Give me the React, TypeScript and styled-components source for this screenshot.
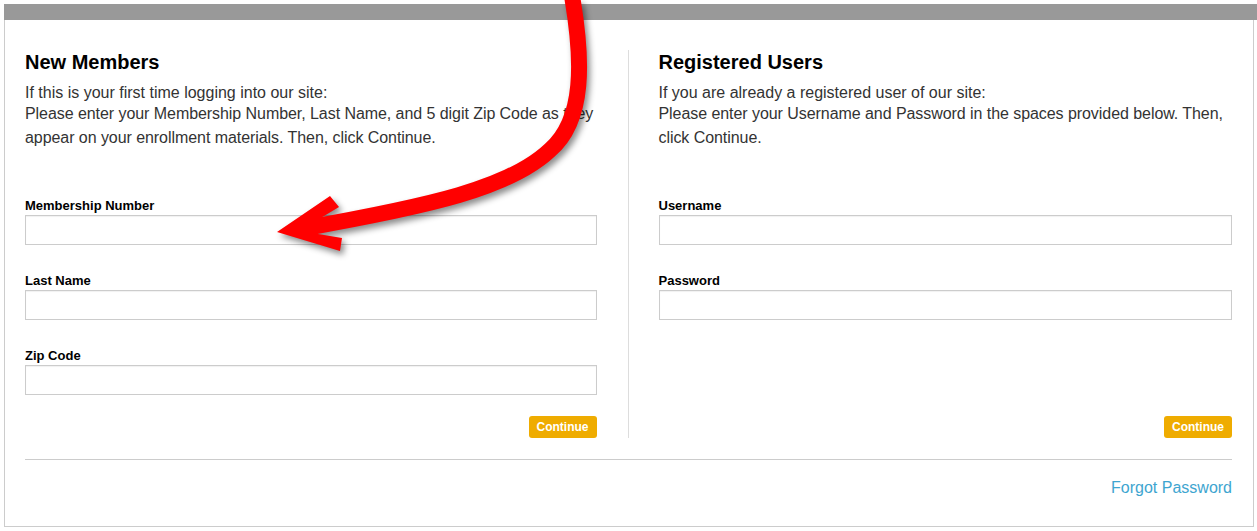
import styled, { createGlobalStyle } from "styled-components"

const GlobalStyle = createGlobalStyle`
    html, body {
        margin: 0;
        padding: 0;
        background: #ffffff;
    }
    body {
        font-family: "Liberation Sans", Arial, sans-serif;
        color: #333333;
    }
    * {
        box-sizing: border-box;
    }
`

const Page = styled.div`
    position: relative;
    width: 1257px;
    height: 531px;
    padding-top: 4px;
    padding-left: 4px;
    overflow: hidden;
`
const TopBar = styled.div`
    height: 16px;
    background-color: #999999;
`
const Card = styled.div`
    width: 1250px;
    border: 1px solid #cccccc;
    border-top: 0px;
    padding: 30px 21px 29px 20px;
`
const Columns = styled.div`
    display: grid;
    grid-template-columns: 1fr 1fr;
`
const Column = styled.div<{ $left?: boolean }>`
    display: flex;
    flex-direction: column;
    padding-left: ${p => (p.$left ? "0px" : "30px")};
    padding-right: ${p => (p.$left ? "31px" : "0px")};
    border-right: ${p => (p.$left ? "1px solid #dddddd" : "0px")};
`
const Heading = styled.h2`
    margin: 0;
    font-size: 20px;
    line-height: 24px;
    font-weight: bold;
    color: #000000;
`
const Intro = styled.div`
    margin-top: 9px;
    font-size: 16px;
    line-height: 19px;
    color: #333333;
`
const Body = styled.p`
    margin: 0;
    font-size: 16px;
    line-height: 24px;
    letter-spacing: -0.06px;
    color: #333333;
`
const Fields = styled.div`
    margin-top: 48px;
`
const Field = styled.div`
    & + & {
        margin-top: 28px;
    }
`
const Label = styled.label`
    display: block;
    font-size: 13px;
    line-height: 15px;
    font-weight: bold;
    color: #000000;
    margin-bottom: 2px;
`
const Input = styled.input`
    display: block;
    width: 100%;
    height: 30px;
    border: 1px solid #cccccc;
    box-shadow: inset 0px 1px 1px rgba(0, 0, 0, 0.06);
    padding: 0 6px;
    font-family: "Liberation Sans", Arial, sans-serif;
    font-size: 14px;
    outline: none;
`
const ButtonRow = styled.div`
    margin-top: auto;
    padding-top: 21px;
    display: flex;
    justify-content: flex-end;
`
const ContinueButton = styled.button`
    height: 22px;
    padding: 0 8px;
    border: 0px;
    border-radius: 3px;
    background-color: #efac00;
    color: #ffffff;
    font-family: "Liberation Sans", Arial, sans-serif;
    font-size: 12px;
    font-weight: bold;
    cursor: pointer;
`
const Rule = styled.hr`
    margin: 21px 0 0 0;
    border: 0px;
    border-top: 1px solid #cccccc;
`
const Footer = styled.div`
    display: flex;
    justify-content: flex-end;
    margin-top: 18px;
`
const ForgotLink = styled.a`
    font-size: 16px;
    line-height: 19px;
    color: #3ea5d0;
    text-decoration: none;
    cursor: pointer;
`
const ArrowLayer = styled.svg`
    position: absolute;
    top: 0;
    left: 0;
    pointer-events: none;
    filter: drop-shadow(3px 4px 3px rgba(0, 0, 0, 0.45));
`

function Arrow() {
    return (
        <ArrowLayer width="1257" height="531" viewBox="0 0 1257 531">
            <path
                d="M 572 -4 C 583 60, 585 120, 550 150 C 510 188, 430 206, 300 229"
                fill="none"
                stroke="#ff0000"
                strokeWidth="16"
            />
            <polygon
                points="277,232 330,196 339,207 314,222 318,234 342,238 340,251"
                fill="#ff0000"
            />
        </ArrowLayer>
    )
}

function LoginPage() {
    return (
        <Page>
            <GlobalStyle />
            <TopBar />
            <Card>
                <Columns>
                    <Column $left>
                        <Heading>New Members</Heading>
                        <Intro>If this is your first time logging into our site:</Intro>
                        <Body>
                            Please enter your Membership Number, Last Name, and 5 digit Zip Code as they
                            appear on your enrollment materials. Then, click Continue.
                        </Body>
                        <Fields>
                            <Field>
                                <Label>Membership Number</Label>
                                <Input type="text" />
                            </Field>
                            <Field>
                                <Label>Last Name</Label>
                                <Input type="text" />
                            </Field>
                            <Field>
                                <Label>Zip Code</Label>
                                <Input type="text" />
                            </Field>
                        </Fields>
                        <ButtonRow>
                            <ContinueButton>Continue</ContinueButton>
                        </ButtonRow>
                    </Column>
                    <Column>
                        <Heading>Registered Users</Heading>
                        <Intro>If you are already a registered user of our site:</Intro>
                        <Body>
                            Please enter your Username and Password in the spaces provided below. Then,
                            click Continue.
                        </Body>
                        <Fields>
                            <Field>
                                <Label>Username</Label>
                                <Input type="text" />
                            </Field>
                            <Field>
                                <Label>Password</Label>
                                <Input type="password" />
                            </Field>
                        </Fields>
                        <ButtonRow>
                            <ContinueButton>Continue</ContinueButton>
                        </ButtonRow>
                    </Column>
                </Columns>
                <Rule />
                <Footer>
                    <ForgotLink>Forgot Password</ForgotLink>
                </Footer>
            </Card>
            <Arrow />
        </Page>
    )
}

export default LoginPage
